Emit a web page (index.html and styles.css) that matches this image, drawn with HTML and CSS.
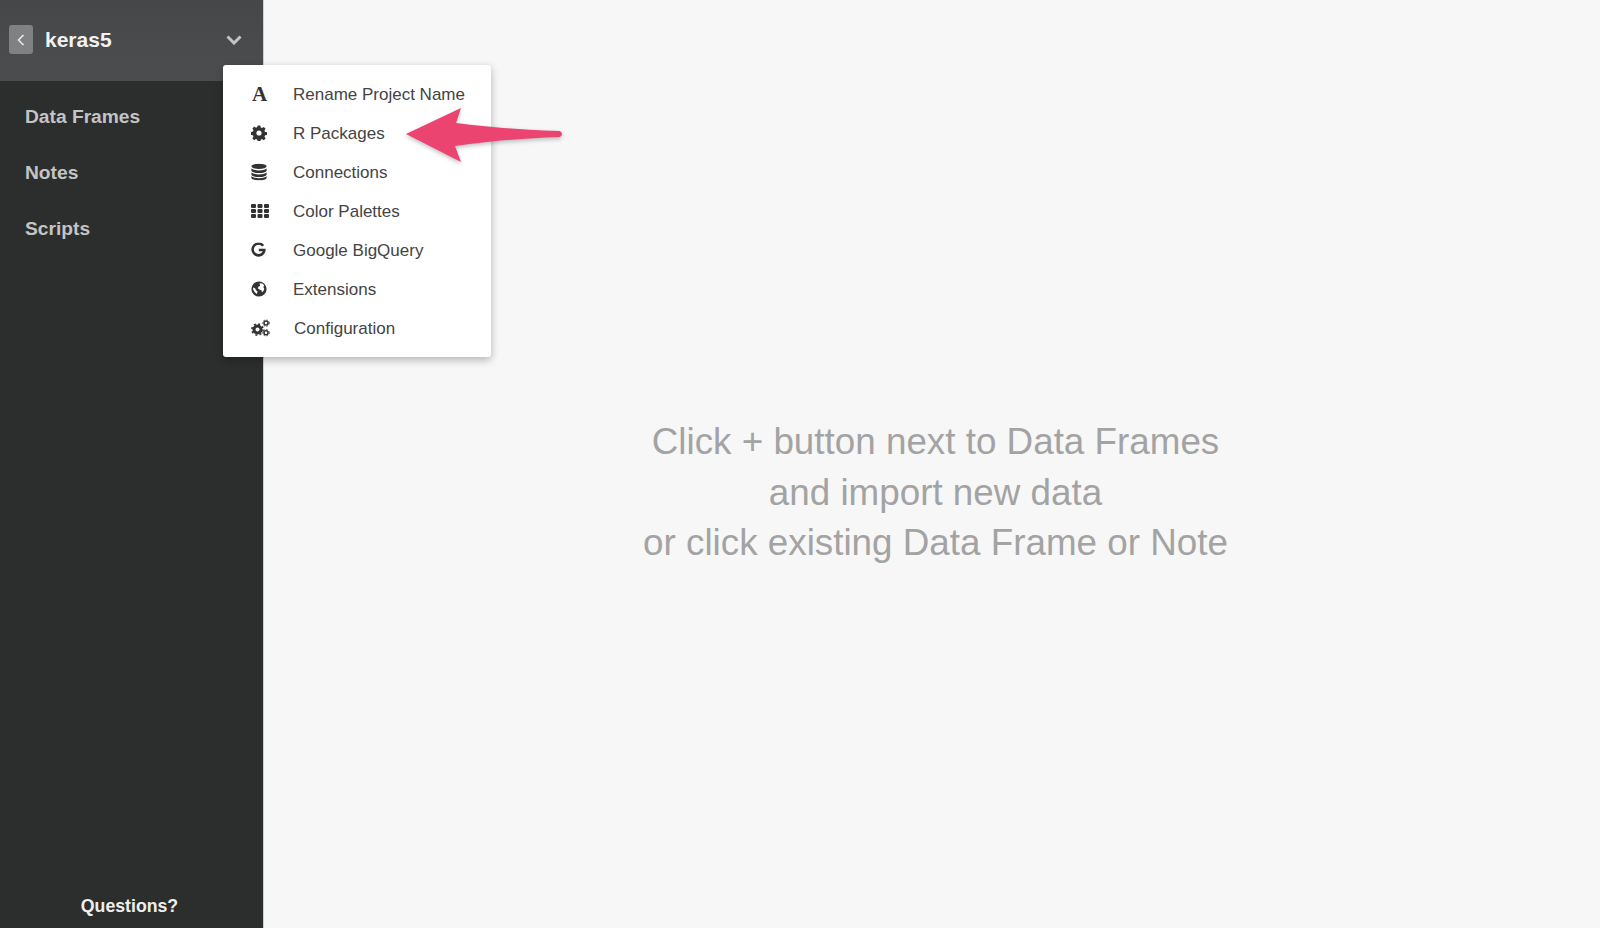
FILE: index.html
```html
<!DOCTYPE html>
<html lang="en">
<head>
  <meta charset="UTF-8" />
  <title>keras5</title>
  <link rel="stylesheet" href="styles.css">
</head>
<body>
  <aside class="sidebar">
    <header class="project-bar">
      <button class="back-btn">
        <svg width="8" height="12" viewBox="0 0 8 12"><path d="M6.5 1 L1.5 6 L6.5 11" fill="none" stroke="#eee" stroke-width="1.5"/></svg>
      </button>
      <span class="project-name">keras5</span>
      <svg class="chevron" width="16" height="10" viewBox="0 0 16 10"><path d="M1.5 1.5 L8 8 L14.5 1.5" fill="none" stroke="#c4c4c4" stroke-width="3"/></svg>
    </header>
    <nav class="side-nav">
      <a href="#frames">Data Frames</a>
      <a href="#notes">Notes</a>
      <a href="#scripts">Scripts</a>
    </nav>
    <div class="questions">Questions?</div>
  </aside>

  <main class="content">
    <p>Click + button next to Data Frames</p>
    <p>and import new data</p>
    <p>or click existing Data Frame or Note</p>
  </main>

  <ul class="menu">
    <li>
      <span class="icon icon-letter">A</span>
      <span class="label">Rename Project Name</span>
    </li>
    <li>
      <svg class="icon" width="16" height="16" viewBox="0 0 16 16"><path fill="#333" fill-rule="evenodd" d="M6.7 0.5h2.6l.4 2 1.3.6 1.8-1.1 1.8 1.8-1.1 1.8.6 1.3 2 .4v2.6l-2 .4-.6 1.3 1.1 1.8-1.8 1.8-1.8-1.1-1.3.6-.4 2H6.7l-.4-2-1.3-.6-1.8 1.1-1.8-1.8 1.1-1.8-.6-1.3-2-.4V6.9l2-.4.6-1.3-1.1-1.8 1.8-1.8 1.8 1.1 1.3-.6zM8 5.4a2.6 2.6 0 1 0 0 5.2 2.6 2.6 0 0 0 0-5.2z"/></svg>
      <span class="label">R Packages</span>
    </li>
    <li>
      <svg class="icon" width="16" height="17" viewBox="0 0 16 17"><g fill="#333"><ellipse cx="8" cy="2.8" rx="7.6" ry="2.6"/><path d="M0.4 5v2c0 1.4 3.4 2.6 7.6 2.6s7.6-1.2 7.6-2.6V5c-1.4 1.3-4.4 1.9-7.6 1.9S1.8 6.3.4 5z"/><path d="M0.4 9v2c0 1.4 3.4 2.6 7.6 2.6s7.6-1.2 7.6-2.6V9c-1.4 1.3-4.4 1.9-7.6 1.9S1.8 10.3.4 9z"/><path d="M0.4 12.800v1.600c0 1.400 3.400 2.400 7.600 2.400s7.600-1 7.600-2.400v-1.600c-1.400 1.300-4.400 1.900-7.600 1.900s-6.200-.6-7.600-1.900z"/></g></svg>
      <span class="label">Connections</span>
    </li>
    <li>
      <svg class="icon" width="18" height="14" viewBox="0 0 18 14"><g fill="#333"><rect x="0" y="0" width="5" height="4" rx="1"/><rect x="6.500" y="0" width="5" height="4" rx="1"/><rect x="13" y="0" width="5" height="4" rx="1"/><rect x="0" y="5" width="5" height="4" rx="1"/><rect x="6.500" y="5" width="5" height="4" rx="1"/><rect x="13" y="5" width="5" height="4" rx="1"/><rect x="0" y="10" width="5" height="4" rx="1"/><rect x="6.500" y="10" width="5" height="4" rx="1"/><rect x="13" y="10" width="5" height="4" rx="1"/></g></svg>
      <span class="label">Color Palettes</span>
    </li>
    <li>
      <svg class="icon" width="15" height="15" viewBox="0 0 15 15"><path d="M12.200 3.300A5.900 5.900 0 1 0 13.300 8.200V7.500H7.800" fill="none" stroke="#333" stroke-width="2.600"/></svg>
      <span class="label">Google BigQuery</span>
    </li>
    <li>
      <svg class="icon" width="16" height="16" viewBox="0 0 16 16"><circle cx="8" cy="8" r="7.600" fill="#333"/><path fill="#fff" d="M8.500 2.200l3 .4 1.800 2-1 1.500 1 1.700-.8 2.200-1.600 1.300-.5-2-2-.7-1.600-1.400.8-1.800 1.600-.3zM2 6.500l2 .8 1.200 2.200 1.300.7-.5 2.800-2-1.400L2.300 9z"/></svg>
      <span class="label">Extensions</span>
    </li>
    <li class="item-shift">
      <svg class="icon" width="19" height="17" viewBox="0 0 19 17"><g fill="none" stroke="#333"><circle cx="6.500" cy="10" r="3.500" stroke-width="3"/><circle cx="6.500" cy="10" r="5.600" stroke-width="1.600" stroke-dasharray="2 2.400"/><circle cx="15" cy="3.500" r="2" stroke-width="1.500"/><circle cx="15" cy="3.500" r="3.300" stroke-width="1" stroke-dasharray="1.500 1.600"/><circle cx="15" cy="13.300" r="2" stroke-width="1.500"/><circle cx="15" cy="13.300" r="3.300" stroke-width="1" stroke-dasharray="1.500 1.600"/></g></svg>
      <span class="label">Configuration</span>
    </li>
  </ul>

  <svg class="arrow" width="160" height="58" viewBox="0 0 160 58">
    <path fill="#ec4470" d="M0 27 L55 1 L50 16 Q95 22 154 24 Q158 27 154 30 Q95 32 49 39 L55 55 Z"/>
  </svg>
</body>
</html>
```

FILE: styles.css
```css
* {
  box-sizing: border-box;
}

body {
  margin: 0;
  height: 928px;
  display: flex;
  overflow: hidden;
  font-family: 'Liberation Sans', Arial, sans-serif;
  background: #f7f7f7;
  color: #444;
}

.sidebar {
  width: 264px;
  display: flex;
  flex-direction: column;
  background: #2c2e2e;
  border-right: 1px solid #d0d0d0;
}

.project-bar {
  height: 81px;
  display: flex;
  align-items: center;
  padding: 0 21px 2px 9px;
  background: linear-gradient(#464749, #4c4d4f);
}

.back-btn {
  width: 24px;
  height: 29px;
  padding: 0;
  display: flex;
  align-items: center;
  justify-content: center;
  border: 0;
  border-radius: 3px;
  background: #808182;
}

.project-name {
  flex: 1;
  margin-left: 12px;
  font-size: 21px;
  font-weight: bold;
  color: #f2f2f2;
}

.side-nav {
  flex: 1;
  display: flex;
  flex-direction: column;
  gap: 33px;
  padding: 24px 25px 0;
}

.side-nav a {
  font-size: 19.2px;
  line-height: 23px;
  font-weight: bold;
  color: #c4c4c4;
  text-decoration: none;
}

.questions {
  padding-bottom: 11px;
  padding-right: 4px;
  text-align: center;
  font-size: 17.7px;
  line-height: 22px;
  font-weight: bold;
  color: #eee;
}

.content {
  flex: 1;
  padding: 417px 0 0 7px;
  text-align: center;
  font-size: 36.8px;
  line-height: 50.5px;
  color: #a3a3a3;
}

.content p {
  margin: 0;
}

.menu {
  position: absolute;
  left: 223px;
  top: 65px;
  width: 268px;
  height: 292px;
  margin: 0;
  padding: 10px 0 0;
  list-style: none;
  background: #fff;
  border-radius: 3px;
  box-shadow: 0 3px 9px rgba(0,0,0,0.28);
}

.menu li {
  height: 39px;
  display: flex;
  align-items: center;
  position: relative;
  padding-left: 70px;
  font-size: 17px;
  color: #444;
}

.menu li.item-shift {
  padding-left: 71px;
}

.icon {
  position: absolute;
  left: 28px;
  top: calc(50% - 1px);
  transform: translateY(-50%);
}

.icon-letter {
  left: 29px;
  font-family: 'Liberation Serif', serif;
  font-size: 21px;
  font-weight: bold;
  color: #333;
}

.arrow {
  position: absolute;
  left: 406px;
  top: 107px;
  filter: drop-shadow(0 2px 2px rgba(0,0,0,0.25));
}
```
